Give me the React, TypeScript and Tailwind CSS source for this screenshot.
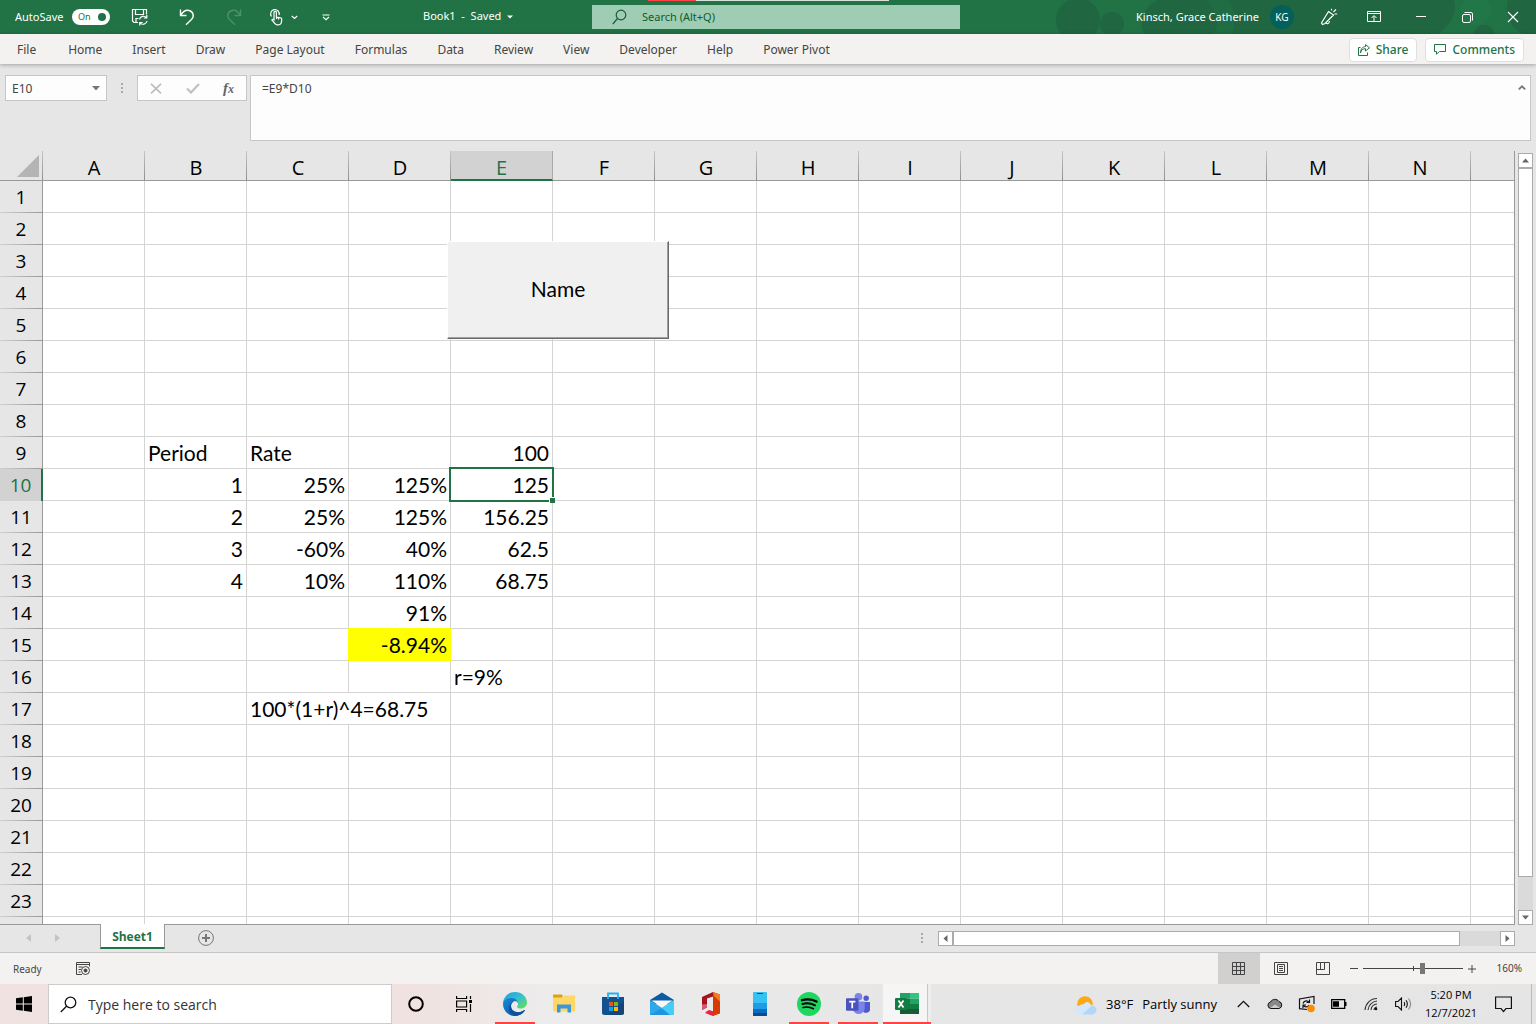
import React from "react";

type Cell = { text: string; align?: "left" | "right"; span?: number; highlight?: boolean; selected?: boolean };

const menu = [
  "File", "Home", "Insert", "Draw", "Page Layout", "Formulas", "Data",
  "Review", "View", "Developer", "Help", "Power Pivot",
];
const columns = ["A", "B", "C", "D", "E", "F", "G", "H", "I", "J", "K", "L", "M", "N"];
const rowCount = 23;

const cells: Record<string, Cell> = {
  B9: { text: "Period", align: "left" },
  C9: { text: "Rate", align: "left" },
  E9: { text: "100" },
  B10: { text: "1" },
  C10: { text: "25%" },
  D10: { text: "125%" },
  E10: { text: "125", selected: true },
  B11: { text: "2" },
  C11: { text: "25%" },
  D11: { text: "125%" },
  E11: { text: "156.25" },
  B12: { text: "3" },
  C12: { text: "-60%" },
  D12: { text: "40%" },
  E12: { text: "62.5" },
  B13: { text: "4" },
  C13: { text: "10%" },
  D13: { text: "110%" },
  E13: { text: "68.75" },
  D14: { text: "91%" },
  D15: { text: "-8.94%", highlight: true },
  E16: { text: "r=9%", align: "left" },
  C17: { text: "100*(1+r)^4=68.75", align: "left", span: 2 },
};

function TitleBar() {
  return (
    <header className="relative grid h-[34px] shrink-0 grid-cols-[592fr_368fr_576fr] bg-[#217346] text-[12px] text-white">
      <div className="flex min-w-0 items-center whitespace-nowrap pl-[15px] text-[11px]">
        <label htmlFor="autosave" className="w-[57px]">AutoSave</label>
        <button id="autosave" role="switch" aria-checked="true" className="flex h-4 w-[38px] items-center justify-between rounded-full bg-white pl-[6px] pr-1 text-[9px] text-[#217346]">
          On <span className="size-2 rounded-full bg-[#217346]" />
        </button>
        <button aria-label="Save" className="ml-[21px]">
          <svg width="18" height="18" viewBox="0 0 18 18" fill="none" stroke="white" strokeWidth="1.2">
            <path d="M7 14.5H3L1.5 13V1.5h14v5M4.500 1.500v5h8v-5M5 14.500v-4h2.500" />
            <path d="M8.500 11.500a4 4 0 0 1 7-1.800M15.800 7v3h-3M16 13a4 4 0 0 1-7 1.800M8.700 17.500v-3h3" />
          </svg>
        </button>
        <button aria-label="Undo" className="ml-[29px]">
          <svg width="18" height="18" viewBox="0 0 18 18" fill="none" stroke="white" strokeWidth="1.400">
            <path d="M2.500 1.500v6h6M2.800 7.200C5 3.500 8 1.800 11 2.500c4.500 1 5.500 6 2.500 9L8 16.800" />
          </svg>
        </button>
        <button aria-label="Redo" className="ml-[29px]">
          <svg width="18" height="18" viewBox="0 0 18 18" fill="none" stroke="#4d9069" strokeWidth="1.400">
            <path d="M15.500 1.500v6h-6M15.200 7.200C13 3.500 10 1.800 7 2.500c-4.500 1-5.500 6-2.500 9L10 16.800" />
          </svg>
        </button>
        <button aria-label="Touch mode" className="ml-[26px] flex items-center">
          <svg width="16" height="18" viewBox="0 0 16 18" fill="none" stroke="white" strokeWidth="1.200">
            <path d="M2.500 8.500a4.300 4.300 0 1 1 7.600-1.500" />
            <path d="M5 11V4.500a1.200 1.200 0 0 1 2.400 0V9l4.200.8c1 .3 1.400 1 1.200 2l-.5 2.700c-.3 1.600-1.200 2.300-2.600 2.300H8.300c-1 0-1.700-.4-2.300-1.200L2.800 12c.6-1 1.500-.9 2.200-.2zM7.500 9v2M9.500 9.500v2" />
          </svg>
          <svg className="ml-[6px]" width="7" height="5" viewBox="0 0 7 5" fill="none" stroke="white" strokeWidth="1.200"><path d="M.8 1l2.700 2.500L6.200 1" /></svg>
        </button>
        <button aria-label="Customize toolbar" className="ml-[24px]">
          <svg width="8" height="7" viewBox="0 0 8 7" fill="none" stroke="white" strokeWidth="1.200"><path d="M.5 1h7M1 3l3 2.700L7 3" /></svg>
        </button>
        <button className="ml-[93px] flex items-center gap-[6px] pb-px">
          <span className="whitespace-pre">Book1  -  Saved</span>
          <svg width="6" height="4" viewBox="0 0 6 4" fill="white"><path d="M0 .5h6L3 3.500z" /></svg>
        </button>
      </div>
      <div className="flex items-center">
        <label className="flex h-6 w-full items-center bg-[#9fcdb3] pl-5 text-[#0e5c2f]">
          <svg width="16" height="16" viewBox="0 0 16 16" fill="none" stroke="#185c37" strokeWidth="1.200"><circle cx="9" cy="6" r="4.800" /><path d="M5.500 9.500L.8 15" /></svg>
          <input aria-label="Search" placeholder="Search (Alt+Q)" className="ml-[14px] min-w-0 flex-1 bg-transparent text-[11px] outline-none placeholder:text-[#0e5c2f]" />
        </label>
      </div>
      <div className="relative flex min-w-0 items-center justify-end overflow-hidden whitespace-nowrap">
        <svg className="absolute right-0 top-0" width="480" height="34" viewBox="0 0 480 34" aria-hidden="true">
          <g fill="#1f6641">
            <circle cx="22" cy="20" r="22" /><circle cx="56" cy="24" r="12" />
            <path d="M88 34c-6-12 0-28 14-34h296c4 12-4 26-16 34z" />
            <circle cx="428" cy="36" r="11" /><path d="M452 0h28v34h-14c-12-8-18-20-14-34z" />
          </g>
          <path fill="#237a4a" d="M156 34c8-6 6-18-4-34h20c10 12 8 24 4 34z" opacity=".3" />
          <circle cx="420" cy="10" r="15" fill="#237a4a" opacity=".6" />
        </svg>
        <span className="relative mr-[11px] pt-px text-[11px]">Kinsch, Grace Catherine</span>
        <button aria-label="Account" className="relative mr-[26px] size-6 rounded-full bg-[#03605a] text-[10px]">KG</button>
        <button aria-label="Coming soon" className="relative mr-[29px]">
          <svg width="18" height="18" viewBox="0 0 18 18" fill="none" stroke="white" strokeWidth="1.200">
            <path d="M8.500 3.500l5 3.500L5 15.500l-2.500 1L1.500 15zM6 14.500c1 2 3 1.500 3.500-1.500M11.500 2.500V.8M13.500 4l2.500-2.700M14.500 6h2.700" />
          </svg>
        </button>
        <button aria-label="Ribbon display options" className="relative mr-[35px]">
          <svg width="14" height="12" viewBox="0 0 14 12" fill="none" stroke="white"><path d="M.5.5h13v10H.5zM.5 2.500h13M7 10V5M4.500 7L7 4.500 9.500 7" /></svg>
        </button>
        <button aria-label="Minimize" className="relative mr-[36px] pb-0.5"><span className="block h-px w-[10px] bg-white" /></button>
        <button aria-label="Restore" className="relative mr-[34px]">
          <svg width="11" height="11" viewBox="0 0 11 11" fill="none" stroke="white"><rect x=".5" y="2.500" width="8" height="8" rx="1.500" /><path d="M2.500.5H9A1.500 1.500 0 0 1 10.500 2v6.500" /></svg>
        </button>
        <button aria-label="Close" className="relative mr-[17px]">
          <svg width="12" height="12" viewBox="0 0 12 12" fill="none" stroke="white" strokeWidth="1.100"><path d="M1 1l10 10M11 1L1 11" /></svg>
        </button>
      </div>
      <div className="absolute left-[648px] top-0 flex h-px w-[241px]" aria-hidden="true">
        <span className="w-12 bg-[#ff4343]" /><span className="flex-1 bg-[#d9e3dc]" />
      </div>
    </header>
  );
}

function Ribbon() {
  return (
    <nav className="z-10 flex h-[30px] shrink-0 items-center whitespace-nowrap bg-[#f3f2f1] pl-[3px] pr-3 pt-px text-[12px] text-[#444] shadow-[0_1px_4px_rgba(0,0,0,0.3)]">
      {menu.map((m) => (
        <button key={m} className="mr-[2px] px-[14px] first:mr-1">{m}</button>
      ))}
      <span className="flex-1" />
      <button className="mr-2 flex h-6 items-center gap-[6px] rounded-sm border border-[#e1dfdd] bg-white px-2 font-medium text-[#217346]">
        <svg width="12" height="12" viewBox="0 0 12 12" fill="none" stroke="#217346"><path d="M2.500 3.500h-2v8h9v-3M2.500 9c.5-3 2.200-4.300 5-4.300V7l4-3.200-4-3.200v2C4.500 2.700 2.500 5 2.500 9z" /></svg>
        Share
      </button>
      <button className="flex h-6 items-center gap-[6px] rounded-sm border border-[#e1dfdd] bg-white px-2 font-medium text-[#217346]">
        <svg width="12" height="11" viewBox="0 0 12 11" fill="none" stroke="#217346"><path d="M.5.5h11v7h-6l-3 2.700V7.500h-2z" /></svg>
        Comments
      </button>
    </nav>
  );
}

function FormulaBar() {
  return (
    <div className="flex shrink-0 items-start pb-[10px] pl-[5px] pr-[5px] pt-[11px] text-[12px] text-[#444]">
      <label className="flex h-[26px] w-[102px] items-center border border-[#c6c6c6] bg-[#fdfdfd] pl-[6px] pr-[6px]">
        <input aria-label="Name box" defaultValue="E10" className="min-w-0 flex-1 bg-transparent pt-px outline-none" />
        <svg width="8" height="5" viewBox="0 0 8 5" fill="#777"><path d="M0 0h8L4 4.500z" /></svg>
      </label>
      <svg className="ml-[14px] mt-2" width="2" height="10" viewBox="0 0 2 10" fill="#aaa"><path d="M0 0h2v2H0zM0 4h2v2H0zM0 8h2v2H0z" /></svg>
      <div className="ml-[14px] flex h-[26px] w-[110px] items-center justify-between border border-[#c6c6c6] bg-[#fdfdfd] px-3">
        <button aria-label="Cancel"><svg width="12" height="11" viewBox="0 0 12 11" stroke="#bcbcbc" strokeWidth="1.600"><path d="M1 .8l10 9.500M11 .8L1 10.300" /></svg></button>
        <button aria-label="Enter"><svg width="14" height="11" viewBox="0 0 14 11" fill="none" stroke="#c0c0c0" strokeWidth="2.200"><path d="M1 5.500l4 4L13 1" /></svg></button>
        <button aria-label="Insert function" className="font-['Liberation_Serif',serif] text-[15px] font-bold italic leading-none text-[#666]">f<span className="text-[12px]">x</span></button>
      </div>
      <div className="ml-[3px] flex h-[66px] flex-1 border border-[#c6c6c6] bg-[#fdfdfd]">
        <textarea aria-label="Formula" defaultValue="=E9*D10" className="min-w-0 flex-1 resize-none bg-transparent pl-[11px] pt-[5px] leading-4 outline-none" />
        <button aria-label="Collapse formula bar" className="mr-1 mt-[9px] self-start"><svg width="8" height="5" viewBox="0 0 8 5" fill="none" stroke="#777" strokeWidth="1.800"><path d="M.8 4.300L4 1.300l3.200 3" /></svg></button>
      </div>
    </div>
  );
}

function SheetCell({ cell }: { cell?: Cell }) {
  const align = cell?.align === "left" ? "text-left" : "text-right";
  return (
    <td colSpan={cell?.span ?? 1} className={`relative border-b border-r border-[#d4d4d4] px-[3px] py-0 ${align}`}>
      {cell?.highlight && <span className="absolute -inset-px bg-[#ffff00]" />}
      {cell && <span className="relative block h-[31px] whitespace-nowrap leading-8">{cell.text}</span>}
      {cell?.selected && (
        <span className="absolute -bottom-[2px] -left-[2px] -right-[2px] -top-[2px] z-10 border-2 border-[#217346]">
          <span className="absolute -bottom-[3px] -right-[3px] size-[6px] border-l border-t border-white bg-[#217346]" />
        </span>
      )}
    </td>
  );
}

function Grid() {
  return (
    <div className="relative min-w-0 flex-1 overflow-hidden border-b border-r border-[#999] bg-[#e6e6e6]">
      <table className="w-full table-fixed border-separate border-spacing-0 font-['Lato',sans-serif] text-[21px] text-black">
        <colgroup>
          <col className="w-[43px]" />
          {columns.map((c) => <col key={c} className="w-[102px]" />)}
          <col />
        </colgroup>
        <thead className="font-['Open_Sans','Noto_Sans',sans-serif] text-[20px]">
          <tr className="h-[30px]">
            <th className="border-b border-[#999] bg-[linear-gradient(#c6c6c6,#8f8f8f)] bg-[length:1px_100%] bg-right bg-no-repeat p-0">
              <svg className="ml-[17px] mt-px" width="22" height="22" viewBox="0 0 22 22" fill="#b4b4b4"><path d="M22 0v22H0z" /></svg>
            </th>
            {columns.map((c) => (
              <th key={c} scope="col" className={c === "E"
                ? "border-b-2 border-r border-[#217346] border-r-[#aaa] bg-[#d2d2d2] p-0 pt-[5px] font-normal leading-[23px] text-[#217346]"
                : "border-b border-[#999] bg-[linear-gradient(#c6c6c6,#8f8f8f)] bg-[length:1px_100%] bg-right bg-no-repeat p-0 pt-1 font-normal leading-[25px]"}>
                {c}
              </th>
            ))}
            <th className="border-b border-[#999] p-0" />
          </tr>
        </thead>
        <tbody className="bg-white">
          {Array.from({ length: rowCount + 1 }, (_, i) => i + 1).map((r) => (
            <tr key={r} className="h-8">
              <th scope="row" className={r === 10
                ? "border-r-2 border-[#217346] bg-[#d2d2d2] p-0 pt-px font-['Open_Sans','Noto_Sans',sans-serif] text-[19px] font-normal leading-[31px] text-[#217346]"
                : "border-r border-[#999] bg-[#e6e6e6] bg-[linear-gradient(90deg,#d0d0d0,#999)] bg-[length:100%_1px] bg-bottom bg-no-repeat p-0 pt-px font-['Open_Sans','Noto_Sans',sans-serif] text-[19px] font-normal leading-[31px]"}>
                {r <= rowCount ? r : ""}
              </th>
              {columns.map((c, ci) => {
                const prev = ci > 0 ? cells[columns[ci - 1] + r] : undefined;
                if (prev?.span === 2) return null;
                return <SheetCell key={c} cell={cells[c + r]} />;
              })}
              <td className="border-b border-[#d4d4d4] p-0" />
            </tr>
          ))}
        </tbody>
      </table>
      <button className="absolute left-[447px] top-[90px] h-[98px] w-[222px] border border-b-[#696969] border-l-white border-r-[#696969] border-t-white bg-[#f0f0f0] pb-[2px] font-['Lato',sans-serif] text-[21px] text-black shadow-[inset_-1px_-1px_0_#a0a0a0]">
        Name
      </button>
    </div>
  );
}

function Arrow({ d }: { d: string }) {
  return <svg width="9" height="9" viewBox="0 0 9 9" fill="#666"><path d={d} /></svg>;
}

function VerticalScroll() {
  return (
    <div className="ml-[3px] mr-[3px] mt-[2px] flex w-[15px] shrink-0 flex-col bg-[#dadada]">
      <button aria-label="Scroll up" className="flex h-[15px] items-center justify-center border border-[#ababab] bg-white"><Arrow d="M1 6.500l3.500-4L8 6.500z" /></button>
      <div className="flex-1 border border-[#ababab] bg-white" />
      <div className="h-[33px]" />
      <button aria-label="Scroll down" className="flex h-[15px] items-center justify-center border border-[#ababab] bg-white"><Arrow d="M1 2.500h7L4.500 6.500z" /></button>
    </div>
  );
}

function SheetTabs() {
  return (
    <div className="flex h-[28px] shrink-0 items-start border-b border-[#c6c6c6] text-[12px]">
      <div className="flex h-[26px] w-[100px] items-center gap-6 pl-[26px]">
        <button aria-label="Previous sheet"><svg width="5" height="8" viewBox="0 0 5 8" fill="#c3c3c3"><path d="M5 0v8L0 4z" /></svg></button>
        <button aria-label="Next sheet"><svg width="5" height="8" viewBox="0 0 5 8" fill="#c3c3c3"><path d="M0 0v8l5-4z" /></svg></button>
      </div>
      <button className="relative z-10 -mt-px h-[25px] w-[65px] border-x border-b-2 border-x-[#999] border-b-[#217346] bg-white pt-[3px] font-['Open_Sans','Noto_Sans',sans-serif] text-[12px] font-bold text-[#217346]">Sheet1</button>
      <button aria-label="New sheet" className="ml-[33px] mt-[5px]">
        <svg width="16" height="16" viewBox="0 0 16 16" fill="none" stroke="#777"><circle cx="8" cy="8" r="7.400" /><path strokeWidth="2" d="M8 4v8M4 8h8" /></svg>
      </button>
      <span className="flex-1" />
      <svg className="mr-[15px] mt-2" width="2" height="10" viewBox="0 0 2 10" fill="#aaa"><path d="M0 0h2v2H0zM0 4h2v2H0zM0 8h2v2H0z" /></svg>
      <div className="mr-[21px] mt-[6px] flex h-[15px] w-[577px] bg-[#dadada]">
        <button aria-label="Scroll left" className="flex w-[15px] items-center justify-center border border-[#ababab] bg-white"><Arrow d="M6.500 1v7L2.500 4.500z" /></button>
        <div className="flex-1 border border-[#ababab] bg-white" />
        <div className="w-10" />
        <button aria-label="Scroll right" className="flex w-[15px] items-center justify-center border border-[#ababab] bg-white"><Arrow d="M2.500 1v7l4-3.500z" /></button>
      </div>
    </div>
  );
}

function StatusBar() {
  return (
    <div className="flex h-[31px] shrink-0 items-center bg-[#f3f2f1] pl-[13px] text-[10px] text-[#444]">
      <span className="w-[63px] pt-px">Ready</span>
      <button aria-label="Macro recording">
        <svg width="15" height="14" viewBox="0 0 15 14" fill="none" stroke="#444"><path d="M6 12.500H.5v-12h13v4M.5 2.500h13M2.500 5h4M2.500 7.500h2.500M2.500 10h2" /><circle cx="9.500" cy="8.500" r="4" /><circle cx="9.500" cy="8.500" r="1.500" fill="#444" /></svg>
      </button>
      <span className="flex-1" />
      <button aria-label="Normal view" className="flex h-full w-[42px] items-center justify-center bg-[#d2d0ce] pr-px">
        <svg width="13" height="13" viewBox="0 0 13 13" fill="none" stroke="#444"><path d="M.5.5h12v12H.5zM.5 4.500h12M.5 8.500h12M4.500.5v12M8.500.5v12" /></svg>
      </button>
      <button aria-label="Page layout view" className="flex h-full w-[42px] items-center justify-center">
        <svg width="14" height="13" viewBox="0 0 14 13" fill="none" stroke="#444"><path d="M.5.5h13v12H.5zM3.500 2.500h7v8h-7zM5 4.500h4M5 6.500h4M5 8.500h4" /></svg>
      </button>
      <button aria-label="Page break view" className="flex h-full w-[42px] items-center justify-center">
        <svg width="14" height="13" viewBox="0 0 14 13" fill="none" stroke="#444"><path d="M.5.5h13v12H.5zM.5 7.500h8v-7M4.500.5v7" /></svg>
      </button>
      <button aria-label="Zoom out" className="ml-[6px] h-px w-2 bg-[#444]" />
      <div className="relative ml-[5px] flex h-4 w-[100px] items-center">
        <span className="absolute left-[50px] top-[5px] h-[5px] w-px bg-[#444]" />
        <input type="range" aria-label="Zoom" min={0} max={100} defaultValue={60} className="relative h-4 w-full appearance-none bg-transparent [&::-webkit-slider-runnable-track]:h-px [&::-webkit-slider-runnable-track]:bg-[#444] [&::-webkit-slider-thumb]:-mt-[5px] [&::-webkit-slider-thumb]:h-[11px] [&::-webkit-slider-thumb]:w-[5px] [&::-webkit-slider-thumb]:appearance-none [&::-webkit-slider-thumb]:bg-[#777]" />
      </div>
      <button aria-label="Zoom in" className="ml-[5px]"><svg width="8" height="8" viewBox="0 0 8 8" stroke="#444"><path d="M0 4h8M4 0v8" /></svg></button>
      <button className="w-[60px] pr-[14px] text-right">160%</button>
    </div>
  );
}

function EdgeIcon() {
  return (
    <svg width="24" height="24" viewBox="0 0 24 24">
      <defs>
        <linearGradient id="edgeTop" x1="0" y1="0" x2="1" y2="1"><stop offset="0" stopColor="#1b9de2" /><stop offset=".5" stopColor="#35c1d0" /><stop offset="1" stopColor="#6be04b" /></linearGradient>
        <linearGradient id="edgeLow" x1="0" y1="0" x2="1" y2="1"><stop offset="0" stopColor="#1a8ad8" /><stop offset="1" stopColor="#0c4c9c" /></linearGradient>
      </defs>
      <path fill="url(#edgeTop)" d="M0 11.500C.3 5 5.500 0 12 0c7 0 12 5 12 10.500 0 3.500-2.700 6-6 6-2.600 0-4-1-4-1.800 0-.6 1-1 1-3 0-2.400-2.400-4.700-6-4.700-4 0-7.500 2-9 4.500z" />
      <path fill="url(#edgeLow)" d="M0 12c.4-3.500 4-6 8.500-6C12.500 6 15 9 15 11.500 14.800 9.800 12.900 9 11.500 9 8.800 10 8 12.500 8 14c0 4.500 4.500 7 9 6 1.500-.3 3-1 4-1.800.6-.3 1 .1.700.6C19.500 22 16 24 12 24 5.400 24 0 18.600 0 12z" />
      <path fill="#0d519f" d="M8 14c0 4.500 4.500 7 9 6 1.500-.3 3-1 4-1.800.6-.3 1 .1.700.6C19.500 22 16 24 12.500 24 7.500 23.500 5.500 19 6 15.500 6.500 12 9 9.500 11.500 9 9 10 8 12 8 14z" />
    </svg>
  );
}

function FolderIcon() {
  return (
    <svg width="22" height="20" viewBox="0 0 22 20">
      <path fill="#ffd766" d="M0 3h10l1-1.500h11v16H0z" />
      <path fill="#e2a00f" d="M0 1.500C0 .7.500.5 1 .5h8l1 1.500-1.500 1.500H0z" />
      <path fill="#3a96dd" d="M4 10.500h14v8h-3.500v-4h-7v4H4z" />
    </svg>
  );
}

function StoreIcon() {
  return (
    <svg width="24" height="24" viewBox="0 0 24 24">
      <path fill="#12508f" d="M1 5h22v15.500A2.500 2.500 0 0 1 20.500 23h-17A2.500 2.500 0 0 1 1 20.500z" />
      <path fill="#1d3a6b" opacity=".6" d="M23 9v11.500a2.500 2.500 0 0 1-2.500 2.500H7z" />
      <path d="M7 7V1.500h10V7" fill="none" stroke="#27b0f5" strokeWidth="1.800" />
      <path fill="#f25022" d="M8 10h4v4H8z" /><path fill="#7fba00" d="M13 10h4v4h-4z" />
      <path fill="#00a4ef" d="M8 15h4v4H8z" /><path fill="#ffb900" d="M13 15h4v4h-4z" />
    </svg>
  );
}

function MailIcon() {
  return (
    <svg width="24" height="24" viewBox="0 0 24 24">
      <path fill="#0d5aa7" d="M0 8l12-7.500L24 8v4H0z" />
      <path fill="#2fa8ea" d="M0 8l12 8 12-8v15H0z" />
      <path fill="#f8f8f8" d="M1.500 8.500h21L12 15.500z" />
      <path fill="#44cdf7" d="M24 8L11 16.500 20 23h4z" />
      <path fill="#1a86d8" d="M0 23h20l-8-7z" opacity=".6" />
    </svg>
  );
}

function OfficeIcon() {
  return (
    <svg width="20" height="24" viewBox="0 0 20 24">
      <path fill="#d83b01" d="M12 0l7 2.500v19L12 24l-8-3 8 .5z" />
      <path fill="#f47c20" d="M12 0l7 2.500v7L13 4z" />
      <path fill="#a4141c" d="M1 5l11-5v4.500L6 6.500v9L1 18z" />
      <path fill="#e6244a" d="M4 20.500L8 18l5 1.500V24z" />
      <path fill="#d45a74" d="M1 12.500V18l5-2.500V12z" />
    </svg>
  );
}

function PhoneIcon() {
  return (
    <svg width="14" height="24" viewBox="0 0 14 24">
      <rect width="14" height="24" rx="1" fill="#35c1f1" />
      <path fill="#1f9de4" d="M0 11h14v7H0z" /><path fill="#0a6cc4" d="M0 17h14v6a1 1 0 0 1-1 1H1a1 1 0 0 1-1-1z" />
      <path fill="#0d4a8a" d="M0 21h14v2a1 1 0 0 1-1 1H1a1 1 0 0 1-1-1zM4 1h6v1H4z" />
    </svg>
  );
}

function SpotifyIcon() {
  return (
    <svg width="24" height="24" viewBox="0 0 24 24">
      <circle cx="12" cy="12" r="12" fill="#1ed760" />
      <g fill="none" stroke="#000" strokeLinecap="round"><path strokeWidth="2.300" d="M5 8.200c5-1.400 10-1 14.500 1.400" /><path strokeWidth="2" d="M5.500 12c4.300-1.200 8.500-.8 12.500 1.300" /><path strokeWidth="1.600" d="M6 15.500c3.500-.9 7-.6 10.500 1.200" /></g>
    </svg>
  );
}

function TeamsIcon() {
  return (
    <svg width="24" height="24" viewBox="0 0 25 24">
      <circle cx="13" cy="4.500" r="4" fill="#7b83eb" /><circle cx="21" cy="6" r="2.800" fill="#5059c9" />
      <path fill="#5059c9" d="M17 10h8v6a4 4 0 0 1-8 2z" />
      <path fill="#7b83eb" d="M7 9.500h12.500v7.500a6.300 6.300 0 0 1-12.500 0z" />
      <rect y="6" width="13" height="13" rx="1" fill="#4b53bc" />
      <path fill="none" stroke="#fff" strokeWidth="1.800" d="M3.200 9.500h6.600M6.500 9.500v7" />
    </svg>
  );
}

function ExcelIcon() {
  return (
    <svg width="24" height="22" viewBox="0 0 24 22">
      <path fill="#21a366" d="M5 0h10v5.500H5z" /><path fill="#33c481" d="M15 0h9v5.500h-9z" />
      <path fill="#107c41" d="M5 5.500h10V16H5z" /><path fill="#21a366" d="M15 5.500h9V11h-9z" />
      <path fill="#107c41" d="M15 11h9v5.500h-9z" /><path fill="#185c37" d="M5 16h19v5H5z" />
      <rect y="5" width="12" height="12" rx="1" fill="#107c41" />
      <path stroke="#fff" strokeWidth="1.800" d="M3.500 7.500l5 7M8.500 7.500l-5 7" />
    </svg>
  );
}

const apps: { name: string; icon: React.ReactNode; open?: boolean }[] = [
  { name: "Edge", icon: <EdgeIcon />, open: true },
  { name: "File Explorer", icon: <FolderIcon /> },
  { name: "Microsoft Store", icon: <StoreIcon /> },
  { name: "Mail", icon: <MailIcon /> },
  { name: "Office", icon: <OfficeIcon /> },
  { name: "Your Phone", icon: <PhoneIcon /> },
  { name: "Spotify", icon: <SpotifyIcon />, open: true },
  { name: "Teams", icon: <TeamsIcon />, open: true },
];

function Taskbar() {
  return (
    <footer className="flex h-10 shrink-0 items-stretch whitespace-nowrap bg-[linear-gradient(90deg,#f0e2e0_0%,#f0e2e0_27%,#ececec_36%,#e6e6e6_60%,#e5e5e5_100%)] font-['Open_Sans','Noto_Sans',sans-serif] text-[14px] text-black">
      <button aria-label="Start" className="flex w-12 items-center justify-center">
        <svg width="16" height="16" viewBox="0 0 16 16"><path d="M0 2.300L6.800 1.300v6.200H0zM7.800 1.200L16 0v7.500H7.800zM0 8.500h6.800v6.200L0 13.700zM7.800 8.500H16V16l-8.200-1.200z" /></svg>
      </button>
      <label className="flex w-[344px] items-center border border-[#ccc] bg-white pl-[11px]">
        <svg width="17" height="17" viewBox="0 0 17 17" fill="none" stroke="#111" strokeWidth="1.300"><circle cx="10.500" cy="6.500" r="5.300" /><path d="M6.500 10.300L.8 16" /></svg>
        <input aria-label="Type here to search" placeholder="Type here to search" className="ml-[11px] min-w-0 flex-1 bg-transparent outline-none placeholder:text-[#333]" />
      </label>
      <button aria-label="Cortana" className="flex w-12 items-center justify-center">
        <svg width="16" height="16" viewBox="0 0 16 16" fill="none" stroke="#000" strokeWidth="2"><circle cx="8" cy="8" r="6.800" /></svg>
      </button>
      <button aria-label="Task view" className="flex w-[51px] items-center justify-center pr-1">
        <svg width="16" height="16" viewBox="0 0 16 16" fill="none" stroke="#000" strokeWidth="1.200"><path d="M.6 0v2.500h10V0M.6 16v-2.500h10V16M.6 5h10v6H.6zM14.500 0v3M14.500 8v8" /><path fill="#000" stroke="none" d="M13 4h3v3h-3z" /></svg>
      </button>
      {apps.map((a) => (
        <button key={a.name} aria-label={a.name} className="relative flex w-[49px] items-center justify-center pr-px">
          {a.icon}
          {a.open && <span className="absolute bottom-0 left-1 h-[2px] w-10 bg-[#ff4343]" />}
        </button>
      ))}
      <button aria-label="Excel" className="relative flex w-12 items-center bg-[#ededed]">
        <span className="flex h-full w-[45px] items-center justify-center border-r border-[#c8c8c8] bg-[#f5f5f5] pl-[3px]"><ExcelIcon /></span>
        <span className="absolute inset-x-0 bottom-0 h-[2px] bg-[#ff4343]" />
      </button>
      <span className="flex-1" />
      <button className="flex items-center pt-[2px] text-[13px]">
        <svg className="mr-[9px]" width="22" height="19" viewBox="0 0 22 19">
          <circle cx="10" cy="8" r="7.800" fill="#fba919" />
          <path fill="#d3e9fb" d="M5 18.500a4.500 4.500 0 0 1-.5-9 6 6 0 0 1 4-1.200C10 5.500 14 4.500 16 9c6-.5 7 8.500 1.500 9.500z" />
          <path fill="#a4cff6" d="M7 18.500L17 9.500c5.500.5 6 8 .5 9z" opacity=".7" />
        </svg>
        <span className="mr-[9px]">38°F</span><span>Partly sunny</span>
      </button>
      <div className="ml-[10px] flex items-center [&>button]:flex [&>button]:w-8 [&>button]:items-center [&>button]:justify-center">
        <button aria-label="Show hidden icons"><svg width="13" height="8" viewBox="0 0 13 8" fill="none" stroke="#111" strokeWidth="1.300"><path d="M.8 7l5.700-5.700L12.200 7" /></svg></button>
        <button aria-label="OneDrive"><svg width="16" height="12" viewBox="0 0 16 12" stroke="#111" fill="#888"><path d="M4 10.500a3.300 3.300 0 0 1-.5-6.500A5 5 0 0 1 12 3.500a3.600 3.600 0 0 1 0 7z" /><path fill="#ccc" stroke="none" d="M3 10l5-3.500L13 10z" /></svg></button>
        <button aria-label="Updates"><svg width="18" height="18" viewBox="0 0 18 18" fill="none" stroke="#111" strokeWidth="1.200"><path d="M9 14.500l-7.500-.8V4L16 1.500V9M5 8.500C6 5.500 9.500 5 11 7.500M11.500 4.500v3h-3M11 10c-1 2.500-4.500 2.500-5.500.5M5 13v-3h3" /><circle cx="13" cy="13.500" r="3.800" fill="#ff8c00" stroke="none" /></svg></button>
        <button aria-label="Battery"><svg width="16" height="10" viewBox="0 0 16 10" fill="none" stroke="#000"><path strokeWidth="1.300" d="M.7.700h13v8.600H.7z" /><path fill="#000" stroke="none" d="M2 2.200h6v5.600H2zM14 3h1.500v4H14z" /></svg></button>
        <button aria-label="Network"><svg width="15" height="14" viewBox="0 0 15 14" fill="none" stroke="#333" strokeWidth="1.100"><path d="M1 13C1.500 6.500 6.500 1.500 13 1.500M4 13c.4-4.800 4.200-8.600 9-9M7 13c.3-3.200 2.800-5.700 6-6" /><path d="M10 13c.2-1.600 1.400-2.800 3-3" /><circle cx="12" cy="12" r="1.300" fill="#111" stroke="none" /></svg></button>
        <button aria-label="Volume"><svg width="17" height="14" viewBox="0 0 17 14" fill="none" stroke="#111" strokeWidth="1.100"><path d="M.6 4.500H3L6.500 1v12L3 9.500H.6zM9 5c.8 1.200.8 2.800 0 4M11 3.300c1.600 2.200 1.600 5.200 0 7.400" /><path stroke="#888" d="M13.500 1.500c2.500 3.300 2.500 7.700 0 11" /></svg></button>
      </div>
      <button className="w-16 text-center text-[11px] leading-[18px]">5:20 PM<br />12/7/2021</button>
      <button aria-label="Notifications" className="flex w-[40px] items-center justify-center">
        <svg width="17" height="17" viewBox="0 0 17 17" fill="none" stroke="#111" strokeWidth="1.200"><path d="M.6 1h15.800v11.500H11l-2.500 3-2.500-3H.6z" /></svg>
      </button>
      <span className="ml-2 mr-1 w-px bg-[#bbb]" />
    </footer>
  );
}

export default function App() {
  return (
    <div className="flex h-screen flex-col overflow-hidden bg-[#e6e6e6] font-['Noto_Sans','Open_Sans',sans-serif]">
      <TitleBar />
      <Ribbon />
      <FormulaBar />
      <main className="flex min-h-0 flex-1">
        <Grid />
        <VerticalScroll />
      </main>
      <SheetTabs />
      <StatusBar />
      <Taskbar />
    </div>
  );
}
